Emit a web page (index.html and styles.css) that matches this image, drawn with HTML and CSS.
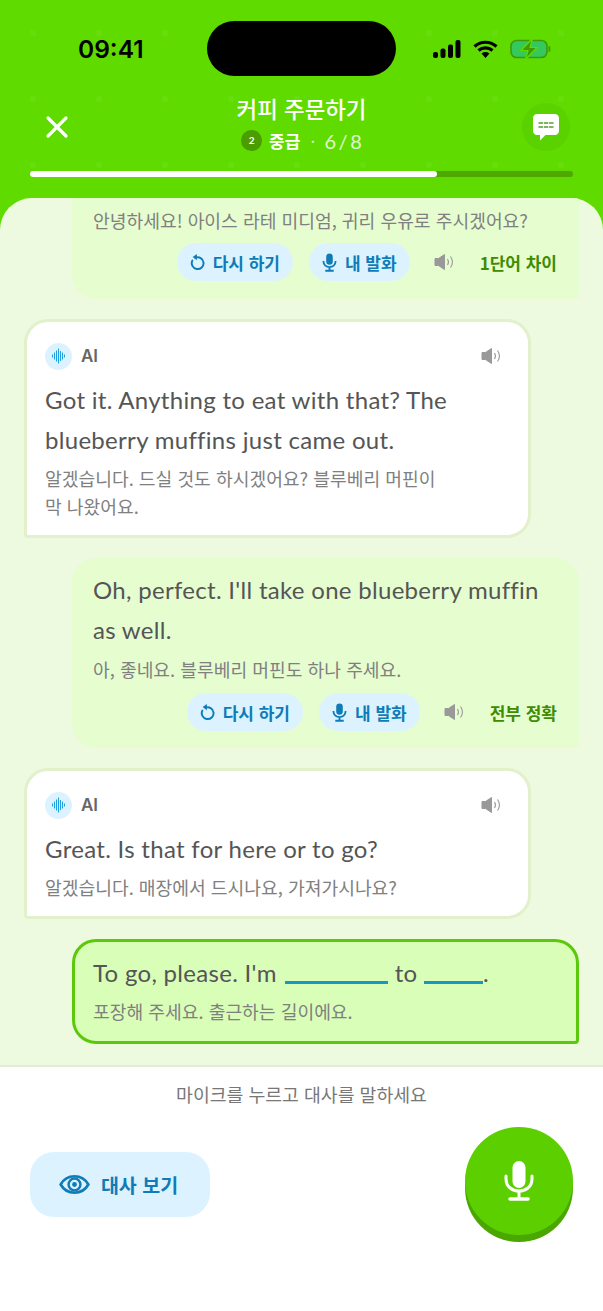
FILE: index.html
```html
<!DOCTYPE html>
<html lang="ko">
<head>
<meta charset="utf-8">
<title>커피 주문하기</title>
<link rel="stylesheet" href="styles.css">
</head>
<body>
<div class="app">
  <header class="top">
    <div class="status">
      <span class="time">09:41</span>
      <div class="island"></div>
      <div class="sys">
        <svg width="28" height="18" viewBox="0 0 28 18"><rect x="0" y="12" width="5" height="6" rx="2" fill="#000"/><rect x="7.500" y="8.500" width="5" height="9.500" rx="2" fill="#000"/><rect x="15" y="4.500" width="5" height="13.500" rx="2" fill="#000"/><rect x="22.500" y="0" width="5" height="18" rx="2" fill="#000"/></svg>
        <svg width="25" height="18" viewBox="0 0 25 18"><path d="M1.500 6.500C7.500 0.800 17.500 0.800 23.500 6.500M5.500 10.500C9.500 7 15.500 7 19.500 10.500" fill="none" stroke="#000" stroke-width="3.200"/><path d="M8.500 13.400C11 11.600 14 11.600 16.500 13.400L12.500 18Z" fill="#000"/></svg>
        <svg width="41" height="22" viewBox="0 0 41 22"><rect x="1" y="2.500" width="36" height="17" rx="5.500" fill="#35c85c" stroke="#3f9a0a" stroke-width="1.600"/><rect x="38.500" y="8" width="1.800" height="6" rx=".9" fill="#3f9a0a"/><path d="M22.500 0.500L11 12.500H18L15.500 21.500L27 9.500H20Z" fill="#3f9a0a" stroke="#5fdb00" stroke-width="1.200"/></svg>
      </div>
    </div>
    <div class="nav">
      <svg class="close" width="26" height="26" viewBox="0 0 26 26"><path d="M4 4L22 22M22 4L4 22" stroke="#fff" stroke-width="3.200" stroke-linecap="round"/></svg>
      <div class="heading">
        <div class="title">커피 주문하기</div>
        <div class="meta"><span class="lvl">2</span><b>중급</b><i>·</i><span class="count">6 / 8</span></div>
      </div>
      <div class="chat">
        <svg width="28" height="28" viewBox="0 0 28 28"><path d="M5 1H23C25.200 1 27 2.800 27 5V18C27 20.200 25.200 22 23 22H13.500L8 27.500V22H5C2.800 22 1 20.200 1 18V5C1 2.800 2.800 1 5 1Z" fill="#fff"/><path d="M6.500 10H21.500M6.500 14H21.500" stroke="#5a9a30" stroke-width="1.400" stroke-dasharray="4.500 .8"/></svg>
      </div>
    </div>
    <div class="progress"><div class="fill" style="width:75%"></div></div>
  </header>

  <main class="sheet">
    <section class="msg user clipped">
      <p class="tr">안녕하세요! 아이스 라테 미디엄, 귀리 우유로 주시겠어요?</p>
      <div class="actions">
        <button class="pill"><svg width="15" height="18" viewBox="0 0 16 18"><path d="M5.800 4.400A6.300 6.300 0 1 1 2.500 7.500" fill="none" stroke="#0f7cb8" stroke-width="2.100" stroke-linecap="round"/><path d="M7.300 0.500V7L2.800 3.700Z" fill="#0f7cb8"/></svg>다시 하기</button>
        <button class="pill"><svg width="15" height="19" viewBox="0 0 16 20"><rect x="4.500" y="0.500" width="7" height="12" rx="3.500" fill="#0f7cb8"/><path d="M1.500 8.500C1.500 17 14.500 17 14.500 8.500M8 14.500V18.500M3.500 18.800H12.500" fill="none" stroke="#0f7cb8" stroke-width="2"/></svg>내 발화</button>
        <svg class="spk" width="22" height="18" viewBox="0 0 22 18"><path d="M1 5.500H4.500L10.500 1.500V16.500L4.500 12.500H1Z" fill="#999" stroke="#999" stroke-linejoin="round"/><path d="M13.500 6C14.800 8 14.800 10 13.500 12M16.500 3.500C19 7 19 11 16.500 14.500" fill="none" stroke="#999" stroke-width="1.100"/></svg>
        <span class="score">1단어 차이</span>
      </div>
    </section>

    <section class="msg ai">
      <div class="who">
        <span class="avatar"><svg width="13" height="16" viewBox="0 0 13 16"><path d="M.5 6.500V9.500M2.500 4.500V11.500M4.500 2.500V13.500M6.500 0.500V15.500M8.500 3V13M10.500 4.500V11.500M12.500 6.500V9.500" stroke="#1f9fe0" stroke-width="1"/></svg></span>
        <span class="name">AI</span>
        <svg class="spk end" width="22" height="18" viewBox="0 0 22 18"><path d="M1 5.500H4.500L10.500 1.500V16.500L4.500 12.500H1Z" fill="#999" stroke="#999" stroke-linejoin="round"/><path d="M13.500 6C14.800 8 14.800 10 13.500 12M16.500 3.500C19 7 19 11 16.500 14.500" fill="none" stroke="#999" stroke-width="1.100"/></svg>
      </div>
      <p class="en">Got it. Anything to eat with that? The blueberry muffins just came out.</p>
      <p class="tr wrap">알겠습니다. 드실 것도 하시겠어요? 블루베리 머핀이 막 나왔어요.</p>
    </section>

    <section class="msg user">
      <p class="en">Oh, perfect. I'll take one blueberry muffin as well.</p>
      <p class="tr">아, 좋네요. 블루베리 머핀도 하나 주세요.</p>
      <div class="actions">
        <button class="pill"><svg width="15" height="18" viewBox="0 0 16 18"><path d="M5.800 4.400A6.300 6.300 0 1 1 2.500 7.500" fill="none" stroke="#0f7cb8" stroke-width="2.100" stroke-linecap="round"/><path d="M7.300 0.500V7L2.800 3.700Z" fill="#0f7cb8"/></svg>다시 하기</button>
        <button class="pill"><svg width="15" height="19" viewBox="0 0 16 20"><rect x="4.500" y="0.500" width="7" height="12" rx="3.500" fill="#0f7cb8"/><path d="M1.500 8.500C1.500 17 14.500 17 14.500 8.500M8 14.500V18.500M3.500 18.800H12.500" fill="none" stroke="#0f7cb8" stroke-width="2"/></svg>내 발화</button>
        <svg class="spk" width="22" height="18" viewBox="0 0 22 18"><path d="M1 5.500H4.500L10.500 1.500V16.500L4.500 12.500H1Z" fill="#999" stroke="#999" stroke-linejoin="round"/><path d="M13.500 6C14.800 8 14.800 10 13.500 12M16.500 3.500C19 7 19 11 16.500 14.500" fill="none" stroke="#999" stroke-width="1.100"/></svg>
        <span class="score">전부 정확</span>
      </div>
    </section>

    <section class="msg ai">
      <div class="who">
        <span class="avatar"><svg width="13" height="16" viewBox="0 0 13 16"><path d="M.5 6.500V9.500M2.500 4.500V11.500M4.500 2.500V13.500M6.500 0.500V15.500M8.500 3V13M10.500 4.500V11.500M12.500 6.500V9.500" stroke="#1f9fe0" stroke-width="1"/></svg></span>
        <span class="name">AI</span>
        <svg class="spk end" width="22" height="18" viewBox="0 0 22 18"><path d="M1 5.500H4.500L10.500 1.500V16.500L4.500 12.500H1Z" fill="#999" stroke="#999" stroke-linejoin="round"/><path d="M13.500 6C14.800 8 14.800 10 13.500 12M16.500 3.500C19 7 19 11 16.500 14.500" fill="none" stroke="#999" stroke-width="1.100"/></svg>
      </div>
      <p class="en">Great. Is that for here or to go?</p>
      <p class="tr">알겠습니다. 매장에서 드시나요, 가져가시나요?</p>
    </section>

    <section class="msg user current">
      <p class="en">To go, please. I'm <span class="blank long"></span> to <span class="blank short"></span>.</p>
      <p class="tr">포장해 주세요. 출근하는 길이에요.</p>
    </section>
  </main>

  <footer class="bottom">
    <p class="hint">마이크를 누르고 대사를 말하세요</p>
    <div class="controls">
      <button class="show"><svg width="31" height="21" viewBox="0 0 32 22"><path d="M1.500 11C8 -0.500 24 -0.500 30.500 11C24 22.500 8 22.500 1.500 11Z" fill="none" stroke="#0f7cb8" stroke-width="2.800"/><circle cx="16" cy="11" r="6.200" fill="none" stroke="#0f7cb8" stroke-width="2.600"/><circle cx="16" cy="11" r="2.500" fill="#0f7cb8"/></svg>대사 보기</button>
      <button class="mic"><svg width="30" height="40" viewBox="0 0 30 40"><rect x="8.500" y="0" width="13" height="27" rx="6.500" fill="#fff"/><path d="M2 15V18C2 34 28 34 28 18V15M15 31V37" fill="none" stroke="#fff" stroke-width="3" stroke-linecap="round"/><path d="M6 38H24" stroke="#fff" stroke-width="3.500" stroke-linecap="round"/></svg></button>
    </div>
  </footer>
</div>
</body>
</html>
```
FILE: styles.css
```css
* { box-sizing: border-box; }
html, body { margin: 0; padding: 0; }
body { font-family: "Lato", "Noto Sans CJK KR", sans-serif; background: #fff; }
p { margin: 0; }
button { font-family: inherit; border: 0; padding: 0; }

.app { width: 603px; height: 1311px; overflow: hidden; display: flex; flex-direction: column; background: linear-gradient(#5fdb00 0 240px, #fff 240px); }

.top {
  height: 198px;
  padding: 21px 30px 0;
  flex: none;
  background-color: #5fdb00;
  background-image: radial-gradient(circle at 33px 33px, rgba(255,255,255,.05) 0 3px, transparent 3.500px);
  background-size: 66px 66px;
}
.status { height: 55px; display: flex; align-items: center; position: relative; padding-left: 48px; }
.time { font: 600 24.500px/1 "Inter", sans-serif; color: #000; width: 129px; padding-top: 2px; }
.island { width: 189px; height: 55px; border-radius: 28px; background: #000; }
.sys { display: flex; align-items: center; gap: 12px; margin-left: 37px; }

.nav { height: 64px; margin-top: 16px; display: flex; align-items: center; justify-content: space-between; position: relative; }
.close { margin-left: 14px; margin-top: 6px; }
.heading { position: absolute; left: 0; right: 0; text-align: center; color: #fff; }
.title { font: 500 22.400px/30px "Noto Sans CJK KR", sans-serif; }
.meta { display: flex; justify-content: center; align-items: center; height: 30px; margin-top: 3px; font: 700 17px/1 "Noto Sans CJK KR", sans-serif; }
.meta b { font-weight: 700; margin-left: 7px; }
.meta i { font-style: normal; font-weight: 400; opacity: .8; margin: 0 10px; width: 4px; }
.count { font: 400 20px/1 "Lato", sans-serif; opacity: .8; word-spacing: -2.500px; }
.lvl { width: 21px; height: 21px; border-radius: 50%; background: #4a9c00; font: 700 10px/21px "Lato", sans-serif; }
.chat { width: 48px; height: 48px; border-radius: 50%; background: #5ad200; display: flex; align-items: center; justify-content: center; position: relative; z-index: 1; margin-right: 3px; margin-top: 6px; }

.progress { height: 6px; margin-top: 15px; border-radius: 3px; background: #4ea800; }
.fill { height: 6px; border-radius: 3px; background: #fff; }

.sheet {
  height: 867px;
  flex: none;
  position: relative;
  background: #eefadf;
  border-radius: 32px 32px 0 0;
  display: flex;
  flex-direction: column;
  gap: 20px;
  overflow: hidden;
  padding: 0 24px;
}

.msg { width: 507px; flex: none; }
.en { font-size: 24px; letter-spacing: .3px; line-height: 40px; color: #555; }
.tr { font: 400 18.200px/28px "Noto Sans CJK KR", sans-serif; color: #808080; }

.user { align-self: flex-end; background: #e6fdd0; border-radius: 24px 24px 4px 24px; padding: 12px 22px 17px 21px; }
.user .en + .tr { margin-top: 5px; }
.clipped { border-radius: 0 0 4px 24px; padding-top: 0; height: 101px; }
.clipped .tr { line-height: 44px; }
.clipped .actions { margin-top: 1px; }

.ai { background: #fff; border: 3px solid #e2f0cb; border-radius: 24px 24px 24px 4px; padding: 20px 18px 15px 18px; }
.ai .en + .tr { margin-top: 4px; }
.who { display: flex; align-items: center; height: 28px; margin-bottom: 10px; }
.avatar { width: 27px; height: 27px; border-radius: 50%; background: #dcf3ff; display: flex; align-items: center; justify-content: center; }
.name { font: 600 17px/1 "Inter", sans-serif; color: #666; margin-left: 9px; }
.end { margin-left: auto; margin-right: 7px; }
.wrap { width: 400px; }

.actions { display: flex; justify-content: flex-end; align-items: center; margin-top: 10px; }
.pill { height: 38px; padding: 0 13px; display: flex; align-items: center; gap: 8px; border-radius: 19px; background: #dcf3ff; color: #0f7cb8; font: 700 17px/1 "Noto Sans CJK KR", sans-serif; margin-right: 16px; }
.spk { flex: none; }
.actions .spk { margin-left: 8px; }
.score { margin-left: 24px; font: 700 17px/1 "Noto Sans CJK KR", sans-serif; color: #3f8c00; }

.current { background: #d8feb8; border: 3px solid #5cc80a; padding: 13px 18px 16px 18px; }
.current .en { line-height: 36px; }
.user.current .en + .tr { margin-top: 6px; }
.blank { display: inline-block; height: 3px; background: #1b95c4; vertical-align: -2px; }
.long { width: 103px; margin-left: 2px; }
.short { width: 59px; }

.bottom { flex: 1; border-top: 2px solid #e3ecd8; background: #fff; padding: 0 30px; }
.hint { text-align: center; font: 400 18.300px/26px "Noto Sans CJK KR", sans-serif; color: #777; margin-top: 14px; }
.controls { display: flex; justify-content: space-between; align-items: flex-start; margin-top: 20px; }
.show { width: 180px; height: 65px; margin-top: 25px; padding-right: 3px; border-radius: 24px; background: #dcf3ff; color: #0f7cb8; font: 700 19.500px/1 "Noto Sans CJK KR", sans-serif; display: flex; align-items: center; justify-content: center; gap: 11px; }
.mic { width: 108px; height: 108px; border-radius: 50%; background: #5ccf00; box-shadow: 0 7px 0 #4aa600; display: flex; align-items: center; justify-content: center; }
```
